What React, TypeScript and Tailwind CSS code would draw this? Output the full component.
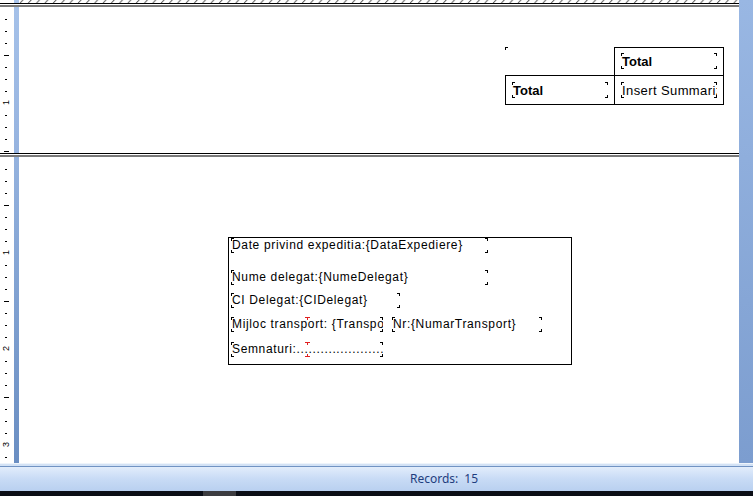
import React from "react";

function Corners({ color = "bg-black" }: { color?: string }) {
  return (
    <>
      <span className={`absolute left-0 top-0 w-[3px] h-px ${color}`} />
      <span className={`absolute left-0 top-0 w-px h-[3px] ${color}`} />
      <span className={`absolute right-0 top-0 w-[3px] h-px ${color}`} />
      <span className={`absolute right-0 top-0 w-px h-[3px] ${color}`} />
      <span className={`absolute left-0 bottom-0 w-[3px] h-px ${color}`} />
      <span className={`absolute left-0 bottom-0 w-px h-[3px] ${color}`} />
      <span className={`absolute right-0 bottom-0 w-[3px] h-px ${color}`} />
      <span className={`absolute right-0 bottom-0 w-px h-[3px] ${color}`} />
    </>
  );
}

function Field({
  className,
  textClass,
  children,
  extra,
}: {
  className: string;
  textClass: string;
  children: React.ReactNode;
  extra?: React.ReactNode;
}) {
  return (
    <div className={"relative shrink-0 " + className}>
      <div className={"h-full overflow-hidden whitespace-nowrap pl-px " + textClass}>{children}</div>
      <Corners />
      {extra}
    </div>
  );
}

function Ruler({ ticks }: { ticks: string[] }) {
  return (
    <div className="w-[14px] shrink-0 bg-white flex flex-col pt-[12px] overflow-hidden">
      {ticks.map((t, i) => (
        <div key={i} className="h-[12px] shrink-0 relative">
          {t === "s" && <div className="ml-[5px] w-[2px] h-px bg-black" />}
          {t === "L" && <div className="ml-[4px] w-[5px] h-px bg-black" />}
          {t !== "s" && t !== "L" && (
            <span className="absolute left-[1px] top-[-6px] w-[11px] h-[11px] flex items-center justify-center -rotate-90 text-[9px] leading-none text-black font-['Liberation_Sans',sans-serif]">
              {t}
            </span>
          )}
        </div>
      ))}
    </div>
  );
}

function DoubleLine() {
  return (
    <div className="flex flex-col h-[4px] shrink-0">
      <div className="h-px bg-black" />
      <div className="h-px bg-white" />
      <div className="h-[2px] bg-[#7a7a7a]" />
    </div>
  );
}

const ticks1 = ["s", "s", "s", "L", "s", "s", "s", "1", "s", "s", "s", "L"];
const ticks2 = [
  "s", "s", "s", "L", "s", "s", "s", "1",
  "s", "s", "s", "L", "s", "s", "s", "2",
  "s", "s", "s", "L", "s", "s", "s", "3", "s",
];

export default function App() {
  const arial = "font-['Liberation_Sans',Arial,sans-serif]";
  const txt = `${arial} text-[12px] leading-[15px] tracking-[0.65px] text-black`;
  const bold = `${arial} text-[13px] leading-[17px] font-bold text-black`;
  const reg = `${arial} text-[13px] leading-[17px] tracking-[0.4px] text-black`;

  return (
    <div className="w-[753px] h-[496px] flex flex-col bg-white overflow-hidden">
      <div className="flex h-[463px] shrink-0">
        <div className="w-[739px] flex flex-col">
          {/* hatch strip */}
          <div className="flex h-[3px] shrink-0">
            <div className="w-[14px] bg-white" />
            <div className="w-[5px] bg-[#a7c3eb]" />
            <svg width="720" height="3" className="block">
              <defs>
                <pattern id="hatch" width="8.3" height="3" patternUnits="userSpaceOnUse">
                  <line x1="1" y1="3" x2="4" y2="0" stroke="#555" strokeWidth="1" />
                </pattern>
              </defs>
              <rect width="720" height="3" fill="url(#hatch)" />
            </svg>
          </div>
          <DoubleLine />

          {/* section 1 */}
          <div className="flex h-[146px] shrink-0">
            <Ruler ticks={ticks1} />
            <div className="w-[5px] shrink-0 bg-gradient-to-b from-[#a5c1e9] to-[#96b3df]" />
            <div className="flex-1 pl-[486px] pt-[40px]">
              <div className="flex flex-col w-[219px]">
                <div className="flex h-[28px]">
                  <div className="w-[109px] relative">
                    <span className="absolute left-0 top-0 w-[3px] h-px bg-black" />
                    <span className="absolute left-0 top-0 w-px h-[3px] bg-black" />
                  </div>
                  <div className="w-[110px] border border-b-0 border-black pl-[6px] pt-[5px]">
                    <Field className="w-[96px] h-[16px]" textClass={bold}>
                      Total
                    </Field>
                  </div>
                </div>
                <div className="flex h-[30px] border border-black">
                  <div className="w-[109px] border-r border-black pl-[6px] pt-[6px]">
                    <Field className="w-[96px] h-[16px]" textClass={bold}>
                      Total
                    </Field>
                  </div>
                  <div className="flex-1 pl-[6px] pt-[6px]">
                    <Field className="w-[96px] h-[16px]" textClass={reg}>
                      Insert Summarized Value
                    </Field>
                  </div>
                </div>
              </div>
            </div>
          </div>
          <DoubleLine />

          {/* section 2 */}
          <div className="flex flex-1 overflow-hidden">
            <Ruler ticks={ticks2} />
            <div className="w-[5px] shrink-0 bg-gradient-to-b from-[#94b2de] to-[#6a8ec2]" />
            <div className="flex-1 pl-[209px] pt-[80px]">
              <div className="w-[344px] h-[128px] border border-black pl-[2px] flex flex-col">
                <Field className="w-[257px] h-[15px]" textClass={txt}>
                  Date privind expeditia:{"{DataExpediere}"}
                </Field>
                <Field className="w-[257px] h-[15px] mt-[17px]" textClass={txt}>
                  Nume delegat:{"{NumeDelegat}"}
                </Field>
                <Field className="w-[169px] h-[15px] mt-[8px]" textClass={txt}>
                  CI Delegat:{"{CIDelegat}"}
                </Field>
                <div className="flex mt-[9px]">
                  <Field
                    className="w-[152px] h-[15px]"
                    textClass={txt}
                    extra={
                      <>
                        <span className="absolute left-[74px] top-0 w-[5px] h-px bg-[#e02020]" />
                        <span className="absolute left-[76px] top-0 w-px h-[3px] bg-[#e02020]" />
                      </>
                    }
                  >
                    Mijloc transport: {"{TransportMijloc}"}
                  </Field>
                  <Field className="w-[150px] h-[15px] ml-[9px]" textClass={txt}>
                    Nr:{"{NumarTransport}"}
                  </Field>
                </div>
                <Field
                  className="w-[152px] h-[15px] mt-[10px]"
                  textClass={txt}
                  extra={
                    <>
                      <span className="absolute left-[74px] top-0 w-[5px] h-px bg-[#e02020]" />
                      <span className="absolute left-[76px] top-0 w-px h-[3px] bg-[#e02020]" />
                      <span className="absolute left-[74px] bottom-0 w-[5px] h-px bg-[#e02020]" />
                      <span className="absolute left-[76px] bottom-0 w-px h-[3px] bg-[#e02020]" />
                    </>
                  }
                >
                  Semnaturi:.........................
                </Field>
              </div>
            </div>
          </div>
        </div>
        <div className="w-[14px] shrink-0 bg-gradient-to-b from-[#99b7e3] to-[#7c9dcf]" />
      </div>

      {/* status bar */}
      <div className="h-[28px] shrink-0 flex flex-col">
        <div className="h-px bg-[#eef4fb]" />
        <div className="h-[2px] bg-[#d3e2f5]" />
        <div className="h-px bg-[#7193c3]" />
        <div className="flex-1 bg-gradient-to-b from-[#e2edfb] via-[#c8dbf5] to-[#b9d0f0] flex items-center pl-[410px] text-[12px] text-[#1f3d7e] font-['Noto_Sans',sans-serif]">
          <span>Records:</span>
          <span className="ml-[6px]">15</span>
        </div>
      </div>
      <div className="h-[5px] shrink-0 bg-[#0b0e16] flex">
        <div className="ml-[203px] w-[33px] bg-[#3c3c40]" />
      </div>
    </div>
  );
}
